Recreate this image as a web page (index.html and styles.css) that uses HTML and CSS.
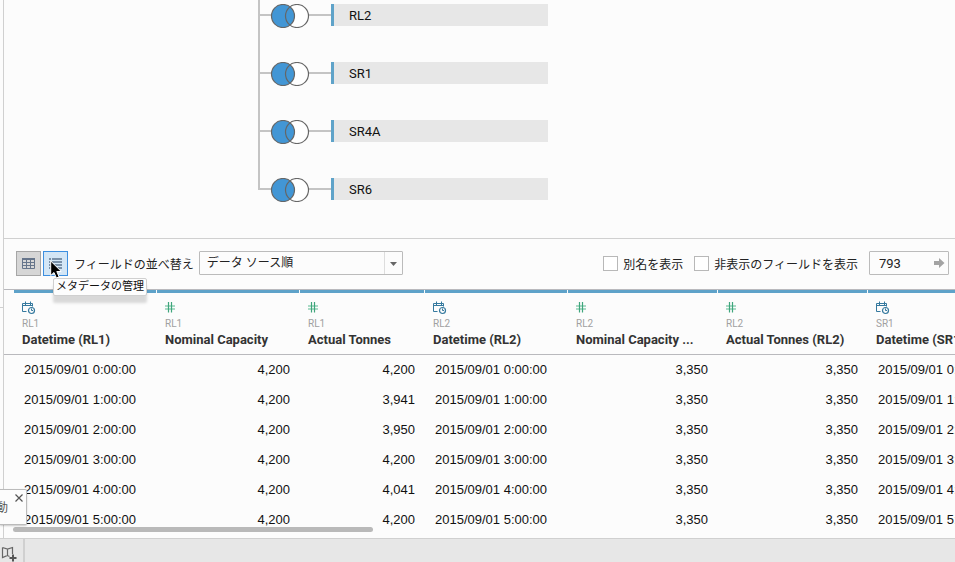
FILE: index.html
```html
<!DOCTYPE html>
<html lang="ja">
<head>
<meta charset="utf-8">
<title>データ ソース</title>
<link rel="stylesheet" href="styles.css">
</head>
<body>
<svg class="defs" aria-hidden="true">
  <symbol id="join" viewBox="0 0 73 24">
    <path d="M2 11H14M50 11H73" stroke="#c4c4c4" stroke-width="2"/>
    <circle cx="39" cy="12" r="11.5" fill="#fff"/>
    <circle cx="25" cy="12" r="11.5" fill="#4296d5" stroke="#666" stroke-width="1.2"/>
    <circle cx="39" cy="12" r="11.5" fill="none" stroke="#666" stroke-width="1.2"/>
  </symbol>
  <symbol id="datetime" viewBox="0 0 14 14">
    <path d="M4.5 10.5H.5V2.500H10.500V5.500M.5 4.500H10.500M3.500 .5V4M8.500 .5V4" fill="none" stroke="#35799e"/>
    <circle cx="9.500" cy="9.500" r="3" fill="#fcfcfc" stroke="#35799e" stroke-width="1.200"/>
    <path d="M9.500 7.500V9.500H11" fill="none" stroke="#35799e"/>
  </symbol>
  <symbol id="number" viewBox="0 0 14 14">
    <path d="M0 5H10M0 8H10" stroke="#8fcfb4" stroke-width="1.6"/>
    <path d="M3.5 1V11.500M6.5 1V11.500" stroke="#3fa57c" stroke-width="1.2"/>
  </symbol>
</svg>
<div class="workspace">
  <aside class="rail"><div class="rail-top"></div></aside>
  <main class="main">
    <section class="canvas">
      <ul class="joins">
        <li><svg class="join"><use href="#join"/></svg><span class="source">RL2</span></li>
        <li><svg class="join"><use href="#join"/></svg><span class="source">SR1</span></li>
        <li><svg class="join"><use href="#join"/></svg><span class="source">SR4A</span></li>
        <li><svg class="join"><use href="#join"/></svg><span class="source">SR6</span></li>
      </ul>
    </section>
    <div class="toolbar">
      <div class="views">
        <button class="view view-grid" type="button" aria-label="データのプレビュー">
          <svg width="13" height="11" viewBox="0 0 13 11"><path d="M.5 .5H12.5V10.5H.5ZM0 4.500H13M0 7.500H13M4.5 0V11M8.5 0V11" fill="none" stroke="#66758b"/><path d="M0 1H13" stroke="#66758b" stroke-width="2"/></svg>
        </button>
        <button class="view view-list" type="button" aria-label="メタデータの管理">
          <svg width="13" height="11" viewBox="0 0 13 11"><path d="M0 1H2M0 4H2M0 7H2M0 10H2M3 1H13M3 4H13M3 7H13M3 10H13" stroke="#5d7590" stroke-width="1.6"/></svg>
        </button>
        <svg class="cursor" viewBox="0 0 12 19"><path d="M.7 1V15.5L4 12.5L6.4 18L9.1 16.8L6.8 11.5H11.3Z" fill="#000" stroke="#fff"/></svg>
        <div class="tooltip">メタデータの管理</div>
      </div>
      <label class="sort-label" for="sort">フィールドの並べ替え</label>
      <div class="select-box">
        <select id="sort"><option>データ ソース順</option></select>
        <svg class="arrow" viewBox="0 0 18 22"><path d="M.5 0V22" stroke="#ddd"/><path d="M6 10H13L9.5 14Z" fill="#666"/></svg>
      </div>
      <div class="options">
        <label class="check"><input type="checkbox">別名を表示</label>
        <label class="check"><input type="checkbox">非表示のフィールドを表示</label>
        <div class="rows-box">
          <input class="rows" type="text" value="793" aria-label="行">
          <svg class="go" viewBox="0 0 11 10"><path d="M0 3H5V0L10.5 5L5 10V7H0Z" fill="#a3a3a3"/></svg>
        </div>
      </div>
    </div>
    <div class="grid">
      <table>
        <colgroup><col class="w-first"><col class="w-m"><col class="w-s"><col class="w-m"><col class="w-l"><col class="w-l"><col class="w-l"></colgroup>
        <thead><tr>
          <th><svg class="type"><use href="#datetime"/></svg><span class="table-name">RL1</span>Datetime (RL1)</th>
          <th><svg class="type"><use href="#number"/></svg><span class="table-name">RL1</span>Nominal Capacity</th>
          <th><svg class="type"><use href="#number"/></svg><span class="table-name">RL1</span>Actual Tonnes</th>
          <th><svg class="type"><use href="#datetime"/></svg><span class="table-name">RL2</span>Datetime (RL2)</th>
          <th><svg class="type"><use href="#number"/></svg><span class="table-name">RL2</span>Nominal Capacity ...</th>
          <th><svg class="type"><use href="#number"/></svg><span class="table-name">RL2</span>Actual Tonnes (RL2)</th>
          <th><svg class="type"><use href="#datetime"/></svg><span class="table-name">SR1</span>Datetime (SR1)</th>
        </tr></thead>
        <tbody>
          <tr><td>2015/09/01 0:00:00</td><td class="num">4,200</td><td class="num">4,200</td><td>2015/09/01 0:00:00</td><td class="num">3,350</td><td class="num">3,350</td><td>2015/09/01 0:00:00</td></tr>
          <tr><td>2015/09/01 1:00:00</td><td class="num">4,200</td><td class="num">3,941</td><td>2015/09/01 1:00:00</td><td class="num">3,350</td><td class="num">3,350</td><td>2015/09/01 1:00:00</td></tr>
          <tr><td>2015/09/01 2:00:00</td><td class="num">4,200</td><td class="num">3,950</td><td>2015/09/01 2:00:00</td><td class="num">3,350</td><td class="num">3,350</td><td>2015/09/01 2:00:00</td></tr>
          <tr><td>2015/09/01 3:00:00</td><td class="num">4,200</td><td class="num">4,200</td><td>2015/09/01 3:00:00</td><td class="num">3,350</td><td class="num">3,350</td><td>2015/09/01 3:00:00</td></tr>
          <tr><td>2015/09/01 4:00:00</td><td class="num">4,200</td><td class="num">4,041</td><td>2015/09/01 4:00:00</td><td class="num">3,350</td><td class="num">3,350</td><td>2015/09/01 4:00:00</td></tr>
          <tr><td>2015/09/01 5:00:00</td><td class="num">4,200</td><td class="num">4,200</td><td>2015/09/01 5:00:00</td><td class="num">3,350</td><td class="num">3,350</td><td>2015/09/01 5:00:00</td></tr>
        </tbody>
      </table>
      <div class="scroll-thumb"></div>
    </div>
  </main>
  <div class="popup">
    <span>動</span>
    <button class="close" type="button" aria-label="閉じる"><svg width="8" height="8" viewBox="0 0 8 8"><path d="M.5 .5L7.5 7.5M7.5 .5L.5 7.5" stroke="#555" stroke-width="1.2"/></svg></button>
  </div>
</div>
<footer class="tabs">
  <button class="new-sheet" type="button" aria-label="新しいストーリー">
    <svg width="17" height="17" viewBox="0 0 17 17"><path d="M2.500 2.500L7.500 4L12.500 2.500V9M2.500 2.500V12.500L7.500 10.500L9.500 11.500M7.500 4V10.500" fill="none" stroke="#666" stroke-width="1.200"/><path d="M13 9.500V16.500M9.500 13H16.500" stroke="#555" stroke-width="2"/></svg>
  </button>
</footer>
</body>
</html>
```
FILE: styles.css
```css
* { box-sizing: border-box; }
body {
  margin: 0;
  min-height: 100vh;
  display: flex;
  flex-direction: column;
  overflow: hidden;
  background: #fcfcfc;
  color: #222;
  font-family: "Liberation Sans", "Noto Sans CJK JP", sans-serif;
  font-size: 13px;
}
button, input, select { font: inherit; color: inherit; margin: 0; padding: 0; }
svg { display: block; }
.defs { position: absolute; width: 0; height: 0; }

.workspace { position: relative; flex: 1; display: flex; }
.rail { flex: none; width: 4px; border-right: 1px solid #d0d0d0; }
.rail-top { height: 308px; border-bottom: 1px solid #d0d0d0; }
.main { flex: 1; min-width: 0; }

.canvas { border-bottom: 1px solid #d0d0d0; }
.joins { list-style: none; margin: 0; padding: 0 0 38px 254px; }
.joins li { position: relative; display: flex; align-items: flex-end; height: 58px; }
.joins li:first-child { height: 26px; }
.joins li::before {
  content: "";
  position: absolute;
  left: 0;
  top: 0;
  bottom: 0;
  width: 2px;
  background: #c4c4c4;
}
.joins li:last-child::before { bottom: 10px; }
.join { width: 73px; height: 24px; margin-bottom: -2px; }
.source {
  width: 217px;
  height: 22px;
  padding-left: 15px;
  border-left: 3px solid #5fa3c9;
  background: #e7e7e7;
  color: #111;
  font-family: Roboto, sans-serif;
  line-height: 24px;
}

.toolbar {
  display: flex;
  align-items: center;
  height: 50px;
  padding: 0 6px 2px 12px;
  font-family: Roboto, "Noto Sans CJK JP", sans-serif;
  font-size: 12px;
}
.views { position: relative; display: flex; gap: 2px; }
.view {
  display: flex;
  align-items: center;
  justify-content: center;
  width: 25px;
  height: 25px;
  border: 1px solid #a6a6a6;
}
.view-grid { background: #d6d6d6; }
.view-list { background: #d3e6f6; border-color: #3d8fe0; }
.cursor { position: absolute; z-index: 3; left: 34px; top: 9px; width: 12px; height: 19px; }
.tooltip {
  position: absolute;
  z-index: 2;
  left: 37px;
  top: 27px;
  padding: 0 2px;
  border: 1px solid #d0d0d0;
  border-radius: 2px;
  background: #fdfdfd;
  box-shadow: 0 7px 3px rgba(0, 0, 0, .14);
  color: #111;
  font-size: 11px;
  line-height: 16px;
  white-space: nowrap;
}
.sort-label { margin: 0 5px 0 6px; }
.select-box { position: relative; width: 204px; height: 24px; }
.select-box select {
  appearance: none;
  width: 100%;
  height: 100%;
  padding-left: 7px;
  border: 1px solid #bbb;
  border-radius: 1px;
  background: #fcfcfc;
}
.arrow { position: absolute; right: 1px; top: 1px; width: 18px; height: 22px; pointer-events: none; }
.options { display: flex; align-items: center; margin-left: auto; }
.check { display: flex; align-items: center; gap: 5px; margin-right: 11px; }
.check input {
  appearance: none;
  width: 15px;
  height: 15px;
  border: 1px solid #b8b8b8;
  background: #fff;
}
.rows-box { position: relative; width: 80px; height: 24px; }
.rows {
  width: 100%;
  height: 100%;
  padding-left: 9px;
  border: 1px solid #bbb;
  border-radius: 1px;
  background: #fcfcfc;
  font-size: 13px;
}
.go { position: absolute; right: 4px; top: 7px; width: 11px; height: 10px; }

.grid { position: relative; overflow: hidden; border-top: 1px solid #b9b9bd; }
table { table-layout: fixed; width: 1014px; border-collapse: separate; border-spacing: 0; }
.w-first { width: 153px; }
.w-s { width: 125px; }
.w-m { width: 143px; }
.w-l { width: 150px; }
th {
  height: 65px;
  padding: 11px 0 0 8px;
  border-bottom: 1px solid #b9b9bd;
  background: linear-gradient(#5ea2c9, #5ea2c9) 0 0 / calc(100% - 1px) 3px no-repeat;
  color: #333;
  font-family: Roboto, sans-serif;
  font-weight: 700;
  line-height: 16px;
  text-align: left;
  vertical-align: top;
  white-space: nowrap;
}
th:first-child {
  padding-left: 18px;
  border-left: 0;
  background-position: 10px 0;
  background-size: calc(100% - 11px) 3px;
}
.type { width: 14px; height: 14px; }
.table-name { display: block; padding-top: 1px; color: #a0a0a0; font-size: 10px; font-weight: 400; line-height: 16px; }
td { height: 30px; padding: 0 10px 2px; color: #111; white-space: nowrap; }
td:first-child { padding-left: 20px; }
.num { text-align: right; }
.scroll-thumb {
  position: absolute;
  left: 9px;
  bottom: 0;
  width: 360px;
  height: 5px;
  margin-bottom: 3px;
  border-radius: 3px;
  background: #b9b9b9;
}

.popup {
  position: absolute;
  left: 0;
  bottom: 13px;
  width: 27px;
  height: 36px;
  overflow: hidden;
  border: 1px solid #bbb;
  border-left: 0;
  border-radius: 0 2px 2px 0;
  background: #fcfcfc;
  box-shadow: 0 1px 2px rgba(0, 0, 0, .2);
  color: #555;
  font-size: 12px;
  line-height: 36px;
}
.popup span { margin-left: -4px; }
.close { position: absolute; right: 3px; top: 4px; border: 0; background: none; }

.tabs { display: flex; height: 24px; border-top: 1px solid #d0d0d0; background: #e7e7e7; }
.new-sheet {
  display: flex;
  align-items: flex-end;
  width: 25px;
  border: 0;
  border-right: 2px solid #d0d0d0;
  background: none;
}
```
